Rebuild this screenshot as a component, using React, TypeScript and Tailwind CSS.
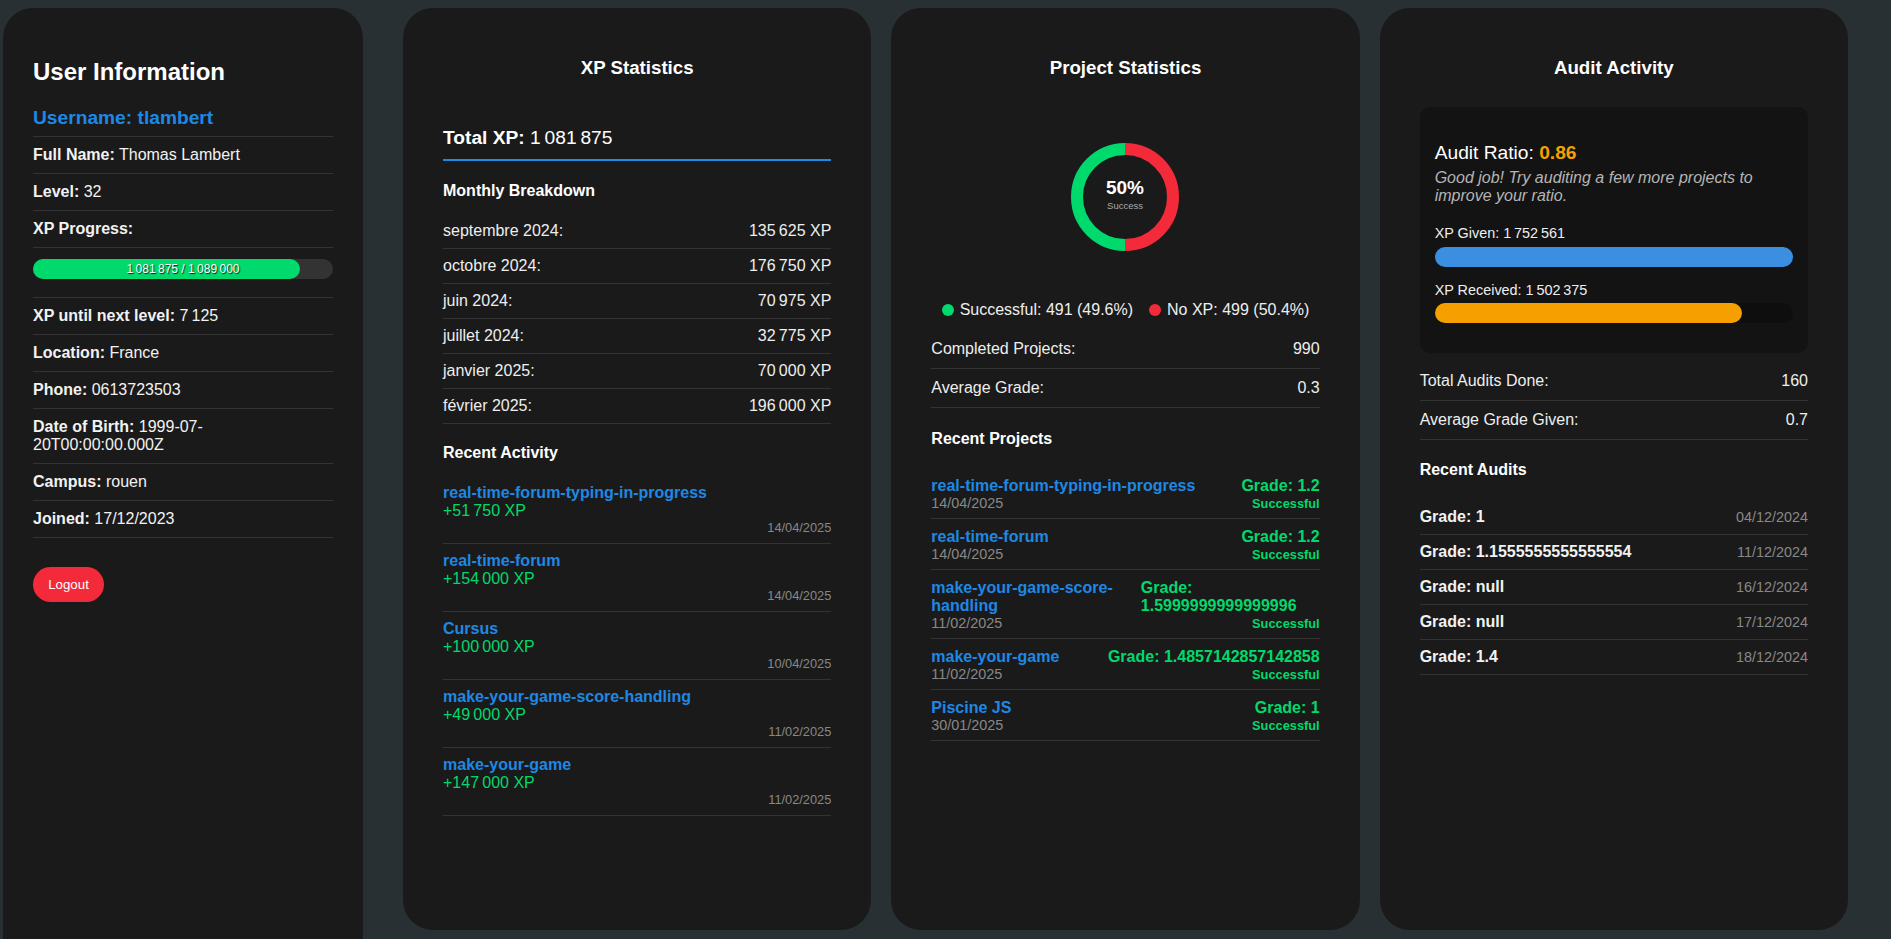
const nb = "\u202f";

const profile = [
  ["Full Name:", "Thomas Lambert"],
  ["Level:", "32"],
];

const profileMore = [
  ["XP until next level:", `7${nb}125`],
  ["Location:", "France"],
  ["Phone:", "0613723503"],
  ["Date of Birth:", "1999-07-20T00:00:00.000Z"],
  ["Campus:", "rouen"],
  ["Joined:", "17/12/2023"],
];

const months = [
  ["septembre 2024:", `135${nb}625 XP`],
  ["octobre 2024:", `176${nb}750 XP`],
  ["juin 2024:", `70${nb}975 XP`],
  ["juillet 2024:", `32${nb}775 XP`],
  ["janvier 2025:", `70${nb}000 XP`],
  ["février 2025:", `196${nb}000 XP`],
];

const activity = [
  ["real-time-forum-typing-in-progress", `+51${nb}750 XP`, "14/04/2025"],
  ["real-time-forum", `+154${nb}000 XP`, "14/04/2025"],
  ["Cursus", `+100${nb}000 XP`, "10/04/2025"],
  ["make-your-game-score-handling", `+49${nb}000 XP`, "11/02/2025"],
  ["make-your-game", `+147${nb}000 XP`, "11/02/2025"],
];

const projects = [
  ["real-time-forum-typing-in-progress", "14/04/2025", "1.2"],
  ["real-time-forum", "14/04/2025", "1.2"],
  ["make-your-game-score-handling", "11/02/2025", "1.5999999999999996"],
  ["make-your-game", "11/02/2025", "1.4857142857142858"],
  ["Piscine JS", "30/01/2025", "1"],
];

const audits = [
  ["1", "04/12/2024"],
  ["1.1555555555555554", "11/12/2024"],
  ["null", "16/12/2024"],
  ["null", "17/12/2024"],
  ["1.4", "18/12/2024"],
];

function InfoRow({ label, value }: { label: string; value: string }) {
  return (
    <div className="border-b border-[#333] py-[9px] text-[16px] leading-[18px] text-[#f2f2f2]">
      <span className="font-bold">{label}</span> {value}
    </div>
  );
}

function CardTitle({ children }: { children: string }) {
  return (
    <h3 className="pt-[49px] text-center text-[18.7px] font-bold leading-[22px] text-white">
      {children}
    </h3>
  );
}

function StatRow({ label, value }: { label: string; value: string }) {
  return (
    <div className="flex justify-between border-b border-[#333] py-[10px] text-[16px] leading-[18px] text-[#eee]">
      <span>{label}</span>
      <span>{value}</span>
    </div>
  );
}

function Donut() {
  return (
    <svg width="120" height="120" viewBox="0 0 120 120" className="mx-auto mt-[58px] block">
      <path d="M60 12 A48 48 0 0 1 60 108" fill="none" stroke="#f22a3a" strokeWidth="12" />
      <path d="M60 108 A48 48 0 0 1 60 12" fill="none" stroke="#00d96b" strokeWidth="12" />
      <text
        x="60"
        y="57"
        textAnchor="middle"
        fill="#fff"
        fontSize="19"
        fontWeight="bold"
        fontFamily="Liberation Sans, Arial, sans-serif"
      >
        50%
      </text>
      <text
        x="60"
        y="72"
        textAnchor="middle"
        fill="#aaa"
        fontSize="9.5"
        fontFamily="Liberation Sans, Arial, sans-serif"
      >
        Success
      </text>
    </svg>
  );
}

export default function App() {
  return (
    <div className="flex h-[939px] overflow-hidden bg-[#293033] font-['Liberation_Sans',Arial,sans-serif]">
      {/* sidebar */}
      <aside className="ml-[3px] mt-[8px] h-[960px] w-[360px] shrink-0 rounded-[30px] bg-[#1a1a1a] px-[30px]">
        <h2 className="mt-[50px] text-[24px] font-bold leading-[28px] text-white">User Information</h2>
        <h3 className="mt-[21px] border-b border-[#333] pb-[7px] text-[19.2px] font-bold leading-[22px] text-[#1e88e5]">
          Username: tlambert
        </h3>
        {profile.map(([l, v]) => (
          <InfoRow key={l} label={l} value={v} />
        ))}
        <div className="border-b border-[#333] py-[9px] text-[16px] font-bold leading-[18px] text-[#f2f2f2]">
          XP Progress:
        </div>
        <div className="border-b border-[#333] pb-[18px] pt-[11px]">
          <div className="relative h-[20px] rounded-full bg-[#333]">
            <div className="h-full w-[89%] rounded-full bg-[#00d96b]" />
            <div className="absolute inset-0 flex items-center justify-center text-[12px] text-white [text-shadow:1px_1px_1px_rgba(0,0,0,0.8)]">
              {`1${nb}081${nb}875 / 1${nb}089${nb}000`}
            </div>
          </div>
        </div>
        {profileMore.map(([l, v]) => (
          <InfoRow key={l} label={l} value={v} />
        ))}
        <button className="mt-[29px] h-[35px] w-[71px] rounded-full bg-[#f22a3a] text-[13.3px] text-white">
          Logout
        </button>
      </aside>

      <main className="grid flex-1 grid-cols-3 gap-5 pl-[40px] pr-[43px] pt-[8px]">
        {/* XP statistics */}
        <section className="h-[922px] rounded-[30px] bg-[#1a1a1a] px-[40px]">
          <CardTitle>XP Statistics</CardTitle>
          <div className="mt-[48px] border-b-2 border-[#1e88e5] pb-[10px] text-[19.2px] leading-[22px] text-white">
            <span className="font-bold">Total XP:</span> {`1${nb}081${nb}875`}
          </div>
          <h4 className="mb-[14px] mt-[21px] text-[16px] font-bold leading-[18px] text-white">Monthly Breakdown</h4>
          {months.map(([m, xp]) => (
            <div
              key={m}
              className="flex justify-between border-b border-[#333] py-[8px] text-[16px] leading-[18px] text-[#eee]"
            >
              <span>{m}</span>
              <span>{xp}</span>
            </div>
          ))}
          <h4 className="mb-[14px] mt-[20px] text-[16px] font-bold leading-[18px] text-white">Recent Activity</h4>
          {activity.map(([name, xp, date], i) => (
            <div key={i} className="border-b border-[#333] pb-[7px] pt-[8px] text-[16px] leading-[18px]">
              <div className="font-bold text-[#1e88e5]">{name}</div>
              <div className="text-[#00d96b]">{xp}</div>
              <div className="text-right text-[12.8px] leading-[16px] text-[#888]">{date}</div>
            </div>
          ))}
        </section>

        {/* project statistics */}
        <section className="h-[922px] rounded-[30px] bg-[#1a1a1a] px-[40px]">
          <CardTitle>Project Statistics</CardTitle>
          <Donut />
          <div className="mt-[44px] flex items-center justify-center gap-4 text-[16px] leading-[18px] text-[#eee]">
            <div className="flex items-center gap-[6px]">
              <span className="h-3 w-3 rounded-full bg-[#00d96b]" />
              <span>Successful: 491 (49.6%)</span>
            </div>
            <div className="flex items-center gap-[6px]">
              <span className="h-3 w-3 rounded-full bg-[#f22a3a]" />
              <span>No XP: 499 (50.4%)</span>
            </div>
          </div>
          <div className="mt-[11px]">
            <StatRow label="Completed Projects:" value="990" />
            <StatRow label="Average Grade:" value="0.3" />
          </div>
          <h4 className="mb-[20px] mt-[22px] text-[16px] font-bold leading-[18px] text-white">Recent Projects</h4>
          {projects.map(([name, date, grade], i) => (
            <div key={i} className="flex justify-between border-b border-[#333] pb-[6px] pt-[9px]">
              <div>
                <div className="text-[16px] font-bold leading-[18px] text-[#1e88e5]">{name}</div>
                <div className="text-[14.4px] leading-[17px] text-[#888]">{date}</div>
              </div>
              <div className="flex flex-col items-end">
                <div className="text-[16px] font-bold leading-[18px] text-[#00d96b]">Grade: {grade}</div>
                <div className="text-[12.8px] font-bold leading-[17px] text-[#00d96b]">Successful</div>
              </div>
            </div>
          ))}
        </section>

        {/* audit activity */}
        <section className="h-[922px] rounded-[30px] bg-[#1a1a1a] px-[40px]">
          <CardTitle>Audit Activity</CardTitle>
          <div className="mt-[28px] rounded-[10px] bg-[#131313] px-[15px] pb-[30px] pt-[35px]">
            <div className="text-[19.2px] leading-[22px] text-white">
              Audit Ratio: <span className="font-bold text-[#f5a000]">0.86</span>
            </div>
            <p className="mt-[5px] text-[16px] italic leading-[18px] text-[#b5b5b5]">
              Good job! Try auditing a few more projects to improve your ratio.
            </p>
            <div className="mt-[20px] text-[14.4px] leading-[17px] text-[#eee]">{`XP Given: 1${nb}752${nb}561`}</div>
            <div className="mt-[5px] h-[20px] rounded-full bg-[#0e0e0e]">
              <div className="h-full w-full rounded-full bg-[#3b8ee0]" />
            </div>
            <div className="mt-[15px] text-[14.4px] leading-[17px] text-[#eee]">{`XP Received: 1${nb}502${nb}375`}</div>
            <div className="mt-[4px] h-[20px] rounded-full bg-[#0e0e0e]">
              <div className="h-full w-[85.7%] rounded-full bg-[#f5a000]" />
            </div>
          </div>
          <div className="mt-[9px]">
            <StatRow label="Total Audits Done:" value="160" />
            <StatRow label="Average Grade Given:" value="0.7" />
          </div>
          <h4 className="mb-[21px] mt-[21px] text-[16px] font-bold leading-[18px] text-white">Recent Audits</h4>
          {audits.map(([grade, date], i) => (
            <div
              key={i}
              className="flex items-center justify-between border-b border-[#333] py-[8px] leading-[18px]"
            >
              <span className="text-[16px] font-bold text-[#f2f2f2]">Grade: {grade}</span>
              <span className="text-[14.4px] text-[#888]">{date}</span>
            </div>
          ))}
        </section>
      </main>
    </div>
  );
}
